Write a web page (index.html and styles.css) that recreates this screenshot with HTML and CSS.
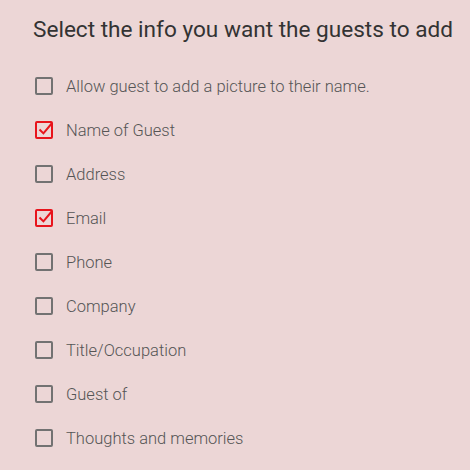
FILE: index.html
```html
<!DOCTYPE html>
<html lang="en">
<head>
  <meta charset="UTF-8">
  <title>Guest info</title>
  <link rel="stylesheet" href="styles.css">
</head>
<body>

<div class="panel">
  <h2 class="title">Select the info you want the guests to add</h2>
  <ul class="options">
    <li class="option"><span class="box"></span><span class="label">Allow guest to add a picture to their name.</span></li>
    <li class="option checked"><span class="box"><svg viewBox="0 0 16 16"><path d="M4 7.5 L7.5 11 L15 2" /></svg></span><span class="label">Name of Guest</span></li>
    <li class="option"><span class="box"></span><span class="label">Address</span></li>
    <li class="option checked"><span class="box"><svg viewBox="0 0 16 16"><path d="M4 7.5 L7.5 11 L15 2" /></svg></span><span class="label">Email</span></li>
    <li class="option"><span class="box"></span><span class="label">Phone</span></li>
    <li class="option"><span class="box"></span><span class="label">Company</span></li>
    <li class="option"><span class="box"></span><span class="label">Title/Occupation</span></li>
    <li class="option"><span class="box"></span><span class="label">Guest of</span></li>
    <li class="option"><span class="box"></span><span class="label">Thoughts and memories</span></li>
  </ul>
</div>

</body>
</html>
```

FILE: styles.css
```css
* { box-sizing: border-box; margin: 0; padding: 0; }
body { background: #ecd6d6; font-family: Roboto, "Liberation Sans", sans-serif; }

.panel {
  padding: 16px 0 0 33px;
}
.title {
  font-size: 22.6px;
  font-weight: 400;
  color: #333;
  line-height: 28px;
  margin-bottom: 20px;
}
.options {
  list-style: none;
  padding-left: 2px;
}
.option {
  display: flex;
  align-items: center;
  height: 44px;
  gap: 13px;
}
.box {
  position: relative;
  width: 18px; height: 18px;
  border: 2px solid #727272;
  border-radius: 2px;
  flex-shrink: 0;
}
.option.checked .box { border-color: #e8141c; }
.box svg {
  position: absolute;
  left: -2px; top: -2px;
  width: 18px; height: 18px;
  overflow: visible;
}
.box svg path {
  fill: none;
  stroke: #e8141c;
  stroke-width: 1.8;
}
.label {
  font-size: 16.5px;
  font-weight: 300;
  color: #555;
}
```
